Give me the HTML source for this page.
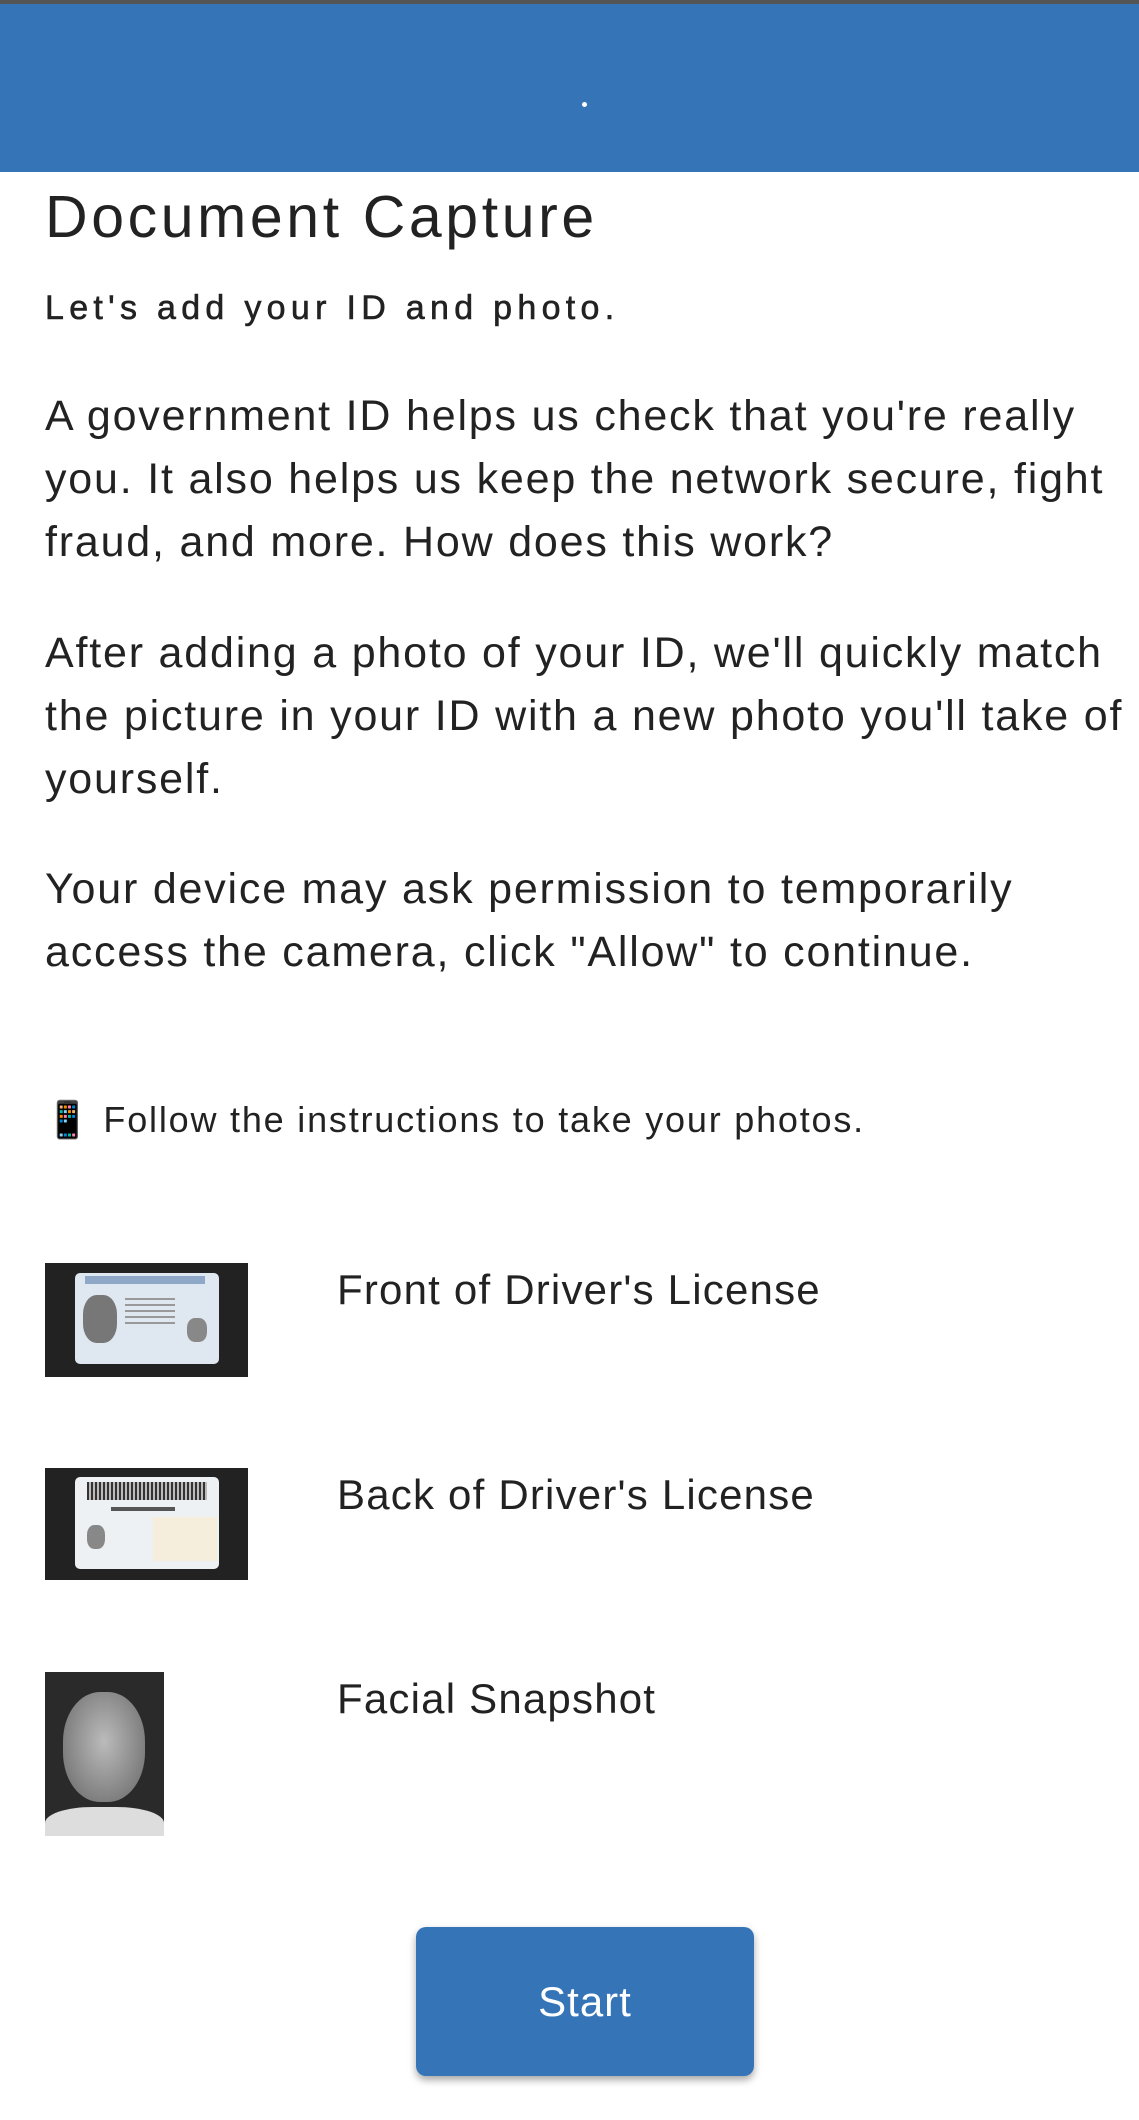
<!DOCTYPE html>
<html><head><meta charset="utf-8"><style>
*{margin:0;padding:0;box-sizing:border-box}
body{width:1139px;height:2120px;background:#fff;font-family:"Liberation Sans",sans-serif;color:#222;position:relative;overflow:hidden}
.hdr{position:absolute;left:0;top:0;width:1139px;height:172px;background:#3575b7;border-top:4px solid #555}
.dot{position:absolute;left:582px;top:98px;width:5px;height:5px;border-radius:50%;background:#fff}
.t{position:absolute;left:45px;white-space:nowrap}
.h1{font-size:59px;letter-spacing:3.6px;top:183px}
.sub{font-size:34px;letter-spacing:5.3px;top:289px;color:#222;-webkit-text-stroke:0.6px #222}
.p{font-size:43px;line-height:63px;letter-spacing:1.8px}
.f{font-size:36px;letter-spacing:1.8px;top:1099px}
.lbl{position:absolute;left:337px;font-size:42px;letter-spacing:1.2px;white-space:nowrap}
.img{position:absolute;background:#222}
.btn{position:absolute;left:416px;top:1927px;width:338px;height:149px;background:#3575b7;border-radius:10px;box-shadow:0 4px 8px rgba(0,0,0,.35);color:#fff;font-size:42px;text-align:center;line-height:149px;letter-spacing:1px}
</style></head><body>
<div class="hdr"><div class="dot"></div></div>
<div class="t h1">Document Capture</div>
<div class="t sub">Let's add your ID and photo.</div>
<div class="t p" style="top:385px">A government ID helps us check that you're really<br>you. It also helps us keep the network secure, fight<br>fraud, and more. How does this work?</div>
<div class="t p" style="top:622px">After adding a photo of your ID, we'll quickly match<br>the picture in your ID with a new photo you'll take of<br>yourself.</div>
<div class="t p" style="top:858px">Your device may ask permission to temporarily<br>access the camera, click "Allow" to continue.</div>
<div class="t f">📱 Follow the instructions to take your photos.</div>

<div class="img" style="left:45px;top:1263px;width:203px;height:114px">
 <div style="position:absolute;left:30px;top:10px;width:144px;height:91px;background:#dfe7f0;border-radius:5px">
  <div style="position:absolute;left:10px;top:3px;width:120px;height:8px;background:#5a7fae;opacity:.6"></div>
  <div style="position:absolute;left:8px;top:22px;width:34px;height:48px;background:#777;border-radius:40%"></div>
  <div style="position:absolute;left:50px;top:25px;width:50px;height:30px;background:repeating-linear-gradient(#999 0 2px,transparent 2px 6px)"></div>
  <div style="position:absolute;left:112px;top:45px;width:20px;height:24px;background:#888;border-radius:40%"></div>
 </div>
</div>
<div class="lbl" style="top:1266px">Front of Driver's License</div>

<div class="img" style="left:45px;top:1468px;width:203px;height:112px">
 <div style="position:absolute;left:30px;top:9px;width:144px;height:92px;background:#eef1f4;border-radius:5px">
  <div style="position:absolute;left:12px;top:5px;width:120px;height:18px;background:repeating-linear-gradient(90deg,#333 0 2px,#bbb 2px 4px)"></div>
  <div style="position:absolute;left:36px;top:30px;width:64px;height:4px;background:#555"></div>
  <div style="position:absolute;left:12px;top:48px;width:18px;height:24px;background:#888;border-radius:40%"></div>
  <div style="position:absolute;left:78px;top:40px;width:64px;height:44px;background:#f6eedd"></div>
 </div>
</div>
<div class="lbl" style="top:1471px">Back of Driver's License</div>

<div class="img" style="left:45px;top:1672px;width:119px;height:164px;background:#2a2a2a;overflow:hidden">
 <div style="position:absolute;left:18px;top:20px;width:82px;height:110px;background:radial-gradient(ellipse at 50% 45%,#bbb,#888 60%,#666);border-radius:45%"></div>
 <div style="position:absolute;left:0;top:135px;width:119px;height:40px;background:#ddd;border-radius:40% 40% 0 0"></div>
</div>
<div class="lbl" style="top:1675px">Facial Snapshot</div>

<div class="btn">Start</div>
</body></html>
